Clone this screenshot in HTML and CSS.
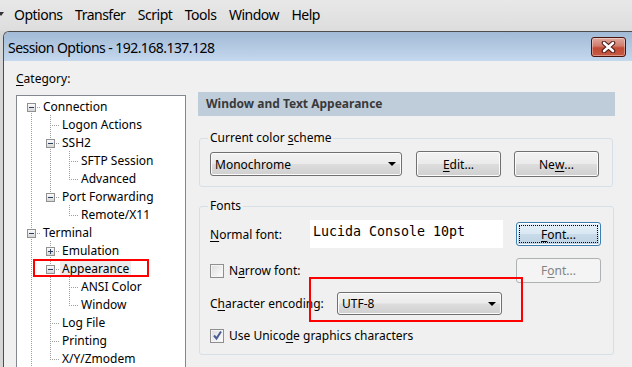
FILE: index.html
```html
<!DOCTYPE html>
<html lang="en">
<head>
  <meta charset="UTF-8">
  <title>Session Options</title>
  <link rel="stylesheet" href="styles.css">
</head>
<body>
  <div class="menubar">
    <span class="caret"></span>
    <span class="menu">Options</span>
    <span class="menu">Transfer</span>
    <span class="menu">Script</span>
    <span class="menu">Tools</span>
    <span class="menu">Window</span>
    <span class="menu">Help</span>
  </div>

  <div class="dialog">
    <div class="titlebar">
      <span class="title">Session Options - 192.168.137.128</span>
      <span class="close">
        <svg width="15" height="12" viewBox="0 0 15 12">
          <path d="M3 2 L12 10 M12 2 L3 10" stroke="#4a1a14" stroke-width="4.6" stroke-linecap="round"/>
          <path d="M3 2 L12 10 M12 2 L3 10" stroke="#fff" stroke-width="2.6" stroke-linecap="round"/>
        </svg>
      </span>
    </div>

    <div class="dlg-body">
      <div class="left">
        <div class="cat-label"><u>C</u>ategory:</div>
        <div class="tree">
          <div class="row"><span class="g start"><i class="exp minus"></i></span><span class="t">Connection</span></div>
          <div class="row"><span class="g v"></span><span class="g tee"></span><span class="t">Logon Actions</span></div>
          <div class="row"><span class="g v"></span><span class="g tee"><i class="exp minus"></i></span><span class="t">SSH2</span></div>
          <div class="row"><span class="g v"></span><span class="g v"></span><span class="g tee"></span><span class="t">SFTP Session</span></div>
          <div class="row"><span class="g v"></span><span class="g v"></span><span class="g end"></span><span class="t">Advanced</span></div>
          <div class="row"><span class="g v"></span><span class="g end"><i class="exp minus"></i></span><span class="t">Port Forwarding</span></div>
          <div class="row"><span class="g v"></span><span class="g"></span><span class="g end"></span><span class="t">Remote/X11</span></div>
          <div class="row"><span class="g tee"><i class="exp minus"></i></span><span class="t">Terminal</span></div>
          <div class="row"><span class="g v"></span><span class="g tee"><i class="exp plus"></i></span><span class="t">Emulation</span></div>
          <div class="row"><span class="g v"></span><span class="g tee"><i class="exp minus"></i></span><span class="t selected">Appearance</span><span class="anno tree-anno"></span></div>
          <div class="row"><span class="g v"></span><span class="g v"></span><span class="g tee"></span><span class="t">ANSI Color</span></div>
          <div class="row"><span class="g v"></span><span class="g v"></span><span class="g end"></span><span class="t">Window</span></div>
          <div class="row"><span class="g v"></span><span class="g tee"></span><span class="t">Log File</span></div>
          <div class="row"><span class="g v"></span><span class="g tee"></span><span class="t">Printing</span></div>
          <div class="row"><span class="g v"></span><span class="g end"></span><span class="t">X/Y/Zmodem</span></div>
        </div>
      </div>

      <div class="right">
        <div class="page-head">Window and Text Appearance</div>

        <fieldset class="group scheme">
          <legend>Current color <u>s</u>cheme</legend>
          <div class="line">
            <div class="combo scheme-combo"><span>Monochrome</span><i class="arrow"></i></div>
            <span class="btn edit"><u>E</u>dit...</span>
            <span class="btn">Ne<u>w</u>...</span>
          </div>
        </fieldset>

        <fieldset class="group fonts">
          <legend>Fonts</legend>
          <div class="line normal">
            <span class="lbl normal-lbl"><u>N</u>ormal font:</span>
            <span class="font-field">Lucida Console 10pt</span>
            <span class="btn focus"><u>F</u>ont...</span>
          </div>
          <div class="line narrow">
            <span class="check"></span>
            <span class="lbl">N<u>a</u>rrow font:</span>
            <span class="btn disabled">F<u>o</u>nt...</span>
          </div>
          <div class="line encoding">
            <span class="lbl enc-lbl">C<u>h</u>aracter encoding:</span>
            <div class="combo enc-combo"><span>UTF-8</span><i class="arrow"></i></div>
          </div>
          <div class="line unicode">
            <span class="check checked">
              <svg width="11" height="11" viewBox="0 0 11 11"><path d="M2 5.5 L4.5 8.5 L9 1.5" stroke="#4a5f97" stroke-width="2" fill="none"/></svg>
            </span>
            <span class="lbl">Use Unico<u>d</u>e graphics characters</span>
          </div>
          <span class="anno enc-anno"></span>
        </fieldset>
      </div>
    </div>
  </div>
</body>
</html>
```

FILE: styles.css
```css
html, body { height: 100%; }
body {
  margin: 0;
  background: #d6d6d6;
  font-family: "Noto Sans", sans-serif;
  font-size: 12px;
  color: #000;
  overflow: hidden;
}
u { text-underline-offset: 2px; }

/* menu bar of the app behind */
.menubar {
  height: 31px; box-sizing: border-box;
  padding-bottom: 3px;
  display: flex; align-items: center;
  background: linear-gradient(#e8e8e8, #dddddd);
  font-size: 14px; letter-spacing: -0.5px;
  padding-left: 1px;
}
.caret {
  width: 0; height: 0; margin-right: 10px;
  border-left: 3px solid transparent; border-right: 3px solid transparent;
  border-top: 4px solid #333;
  margin-left: -3px;
}
.menu { margin-right: 12.5px; }

/* dialog */
.dialog {
  margin-left: 3px;
  border: 1px solid #4d4d4d; border-right: none; border-bottom: none;
  border-radius: 6px 0 0 0;
  background: #f0f0f0;
  height: 336px;
  overflow: hidden;
}
.titlebar {
  height: 29px;
  display: flex; align-items: center; justify-content: space-between;
  padding-left: 4px; padding-right: 6px;
  background: linear-gradient(#a2bad6, #c4d8ee);
  font-size: 14px; letter-spacing: -0.55px;
}
.title { padding-top: 1px; }
.close {
  width: 35px; height: 20px; box-sizing: border-box;
  display: flex; align-items: center; justify-content: center;
  border: 1px solid #4a130c; border-radius: 3px;
  background: linear-gradient(#e0aba0 0%, #d07b6a 45%, #c24a35 55%, #c65a44 100%);
  box-shadow: inset 0 0 0 1px rgba(255,255,255,0.35);
}

.dlg-body { display: flex; padding-left: 12px; }
.left { width: 170px; flex: none; }
.cat-label { margin-top: 10px; line-height: 16px; height: 16px; }
.tree {
  margin-top: 8px;
  height: 290px;
  background: #fff;
  border: 1px solid #828790;
  padding: 1px 0 0 5px;
}
.row { display: flex; height: 18px; align-items: center; position: relative; }
.g {
  width: 19px; height: 18px; flex: none;
  display: flex; align-items: center; justify-content: center;
}
.g.v {
  background: repeating-linear-gradient(to bottom, #a0a0a0 0 1px, transparent 1px 2px) 9px 0 / 1px 100% no-repeat;
}
.g.tee {
  background:
    repeating-linear-gradient(to bottom, #a0a0a0 0 1px, transparent 1px 2px) 9px 0 / 1px 100% no-repeat,
    repeating-linear-gradient(to right, #a0a0a0 0 1px, transparent 1px 2px) 11px 10px / 8px 1px no-repeat;
}
.g.end {
  background:
    repeating-linear-gradient(to bottom, #a0a0a0 0 1px, transparent 1px 2px) 9px 0 / 1px 11px no-repeat,
    repeating-linear-gradient(to right, #a0a0a0 0 1px, transparent 1px 2px) 11px 10px / 8px 1px no-repeat;
}
.g.start {
  background:
    repeating-linear-gradient(to bottom, #a0a0a0 0 1px, transparent 1px 2px) 9px 10px / 1px 8px no-repeat,
    repeating-linear-gradient(to right, #a0a0a0 0 1px, transparent 1px 2px) 11px 10px / 8px 1px no-repeat;
}
.exp {
  width: 9px; height: 9px; box-sizing: border-box;
  border: 1px solid #919191;
  background: linear-gradient(#fbfbfb, #d6d6d6);
  display: flex; align-items: center; justify-content: center;
  position: relative; margin-top: 2px;
}
.exp::before { content: ""; width: 5px; height: 1px; background: #2d3f5e; }
.exp.plus::after {
  content: ""; position: absolute; left: 3px; top: 1px;
  width: 1px; height: 5px; background: #2d3f5e;
}
.t { padding: 2px 2px 0; line-height: 16px; white-space: nowrap; }
.t.selected { background: #ececec; }

/* red annotation frames drawn over the screenshot */
.anno { position: absolute; border: 2px solid #f00; box-sizing: border-box; }
.tree-anno { left: 11px; top: 0; width: 116px; height: 18px; }

/* right side */
.right { width: 417px; margin-left: 12px; padding-top: 31px; }
.page-head {
  height: 24px; line-height: 24px;
  background: #bfcddb;
  padding-left: 8px;
  font-weight: bold; font-size: 12px; color: #3a3a3a;
}
.group {
  margin: 14px 0 0 1px;
  width: 414px; box-sizing: border-box;
  border: 1px solid #d5dfe5; border-radius: 3px;
  padding: 5px 12px 9px 10px;
  position: relative;
}
.group legend { padding: 0 2px; margin-left: -2px; line-height: 16px; }
.group.fonts { margin-top: 11px; padding-top: 6px; padding-bottom: 10px; }
.line { display: flex; align-items: center; }

.btn {
  width: 85px; height: 26px; box-sizing: border-box;
  display: flex; align-items: center; justify-content: center;
  border: 1px solid #707070; border-radius: 3px;
  background: linear-gradient(#f2f2f2 0%, #ebebeb 48%, #dddddd 52%, #cfcfcf 100%);
  box-shadow: inset 0 0 0 1px #fbfbfb;
}
.btn.edit { margin-left: 14px; margin-right: 13px; }
.btn.focus {
  height: 24px; margin-left: 13px;
  border-color: #3c7fb1;
  background: linear-gradient(#e6f1f9 0%, #d9e8f3 48%, #c9dbe9 52%, #bcd2e3 100%);
  outline: 1px dotted #000; outline-offset: -4px;
}
.btn.disabled {
  margin-left: auto; height: 25px;
  border-color: #adb2b5; background: #f4f4f4; box-shadow: none; color: #838383;
}

.combo {
  height: 24px; box-sizing: border-box;
  display: flex; align-items: center; justify-content: space-between;
  border: 1px solid #707070; border-radius: 3px;
  padding: 0 5px 0 4px;
  background: linear-gradient(#f2f2f2 0%, #ebebeb 48%, #dddddd 52%, #cfcfcf 100%);
  box-shadow: inset 0 0 0 1px #fbfbfb;
}
.arrow {
  width: 0; height: 0;
  border-left: 4px solid transparent; border-right: 4px solid transparent;
  border-top: 4px solid #000;
}
.scheme-combo { width: 192px; }
.enc-combo { width: 165px; height: 23px; }

.lbl { white-space: nowrap; }
.normal-lbl { width: 100px; }
.enc-lbl { width: 127px; }
.font-field {
  width: 193px; height: 28px; box-sizing: border-box;
  background: #fff;
  padding: 4px 0 0 3px;
  font-family: "DejaVu Sans Mono", monospace; font-size: 13.3px;
}
.line.narrow { margin-top: 10px; }
.line.encoding { margin-top: 9px; }
.line.unicode { margin-top: 12px; }

.check {
  width: 14px; height: 14px; box-sizing: border-box; flex: none;
  border: 1px solid #8f8f8f;
  background: linear-gradient(135deg, #dcdcdc, #fefefe);
  box-shadow: inset 0 0 0 1px #f4f4f4;
  margin-right: 5px;
  display: flex; align-items: center; justify-content: center;
}
.enc-anno { left: 109px; top: 63px; width: 214px; height: 45px; }
```
